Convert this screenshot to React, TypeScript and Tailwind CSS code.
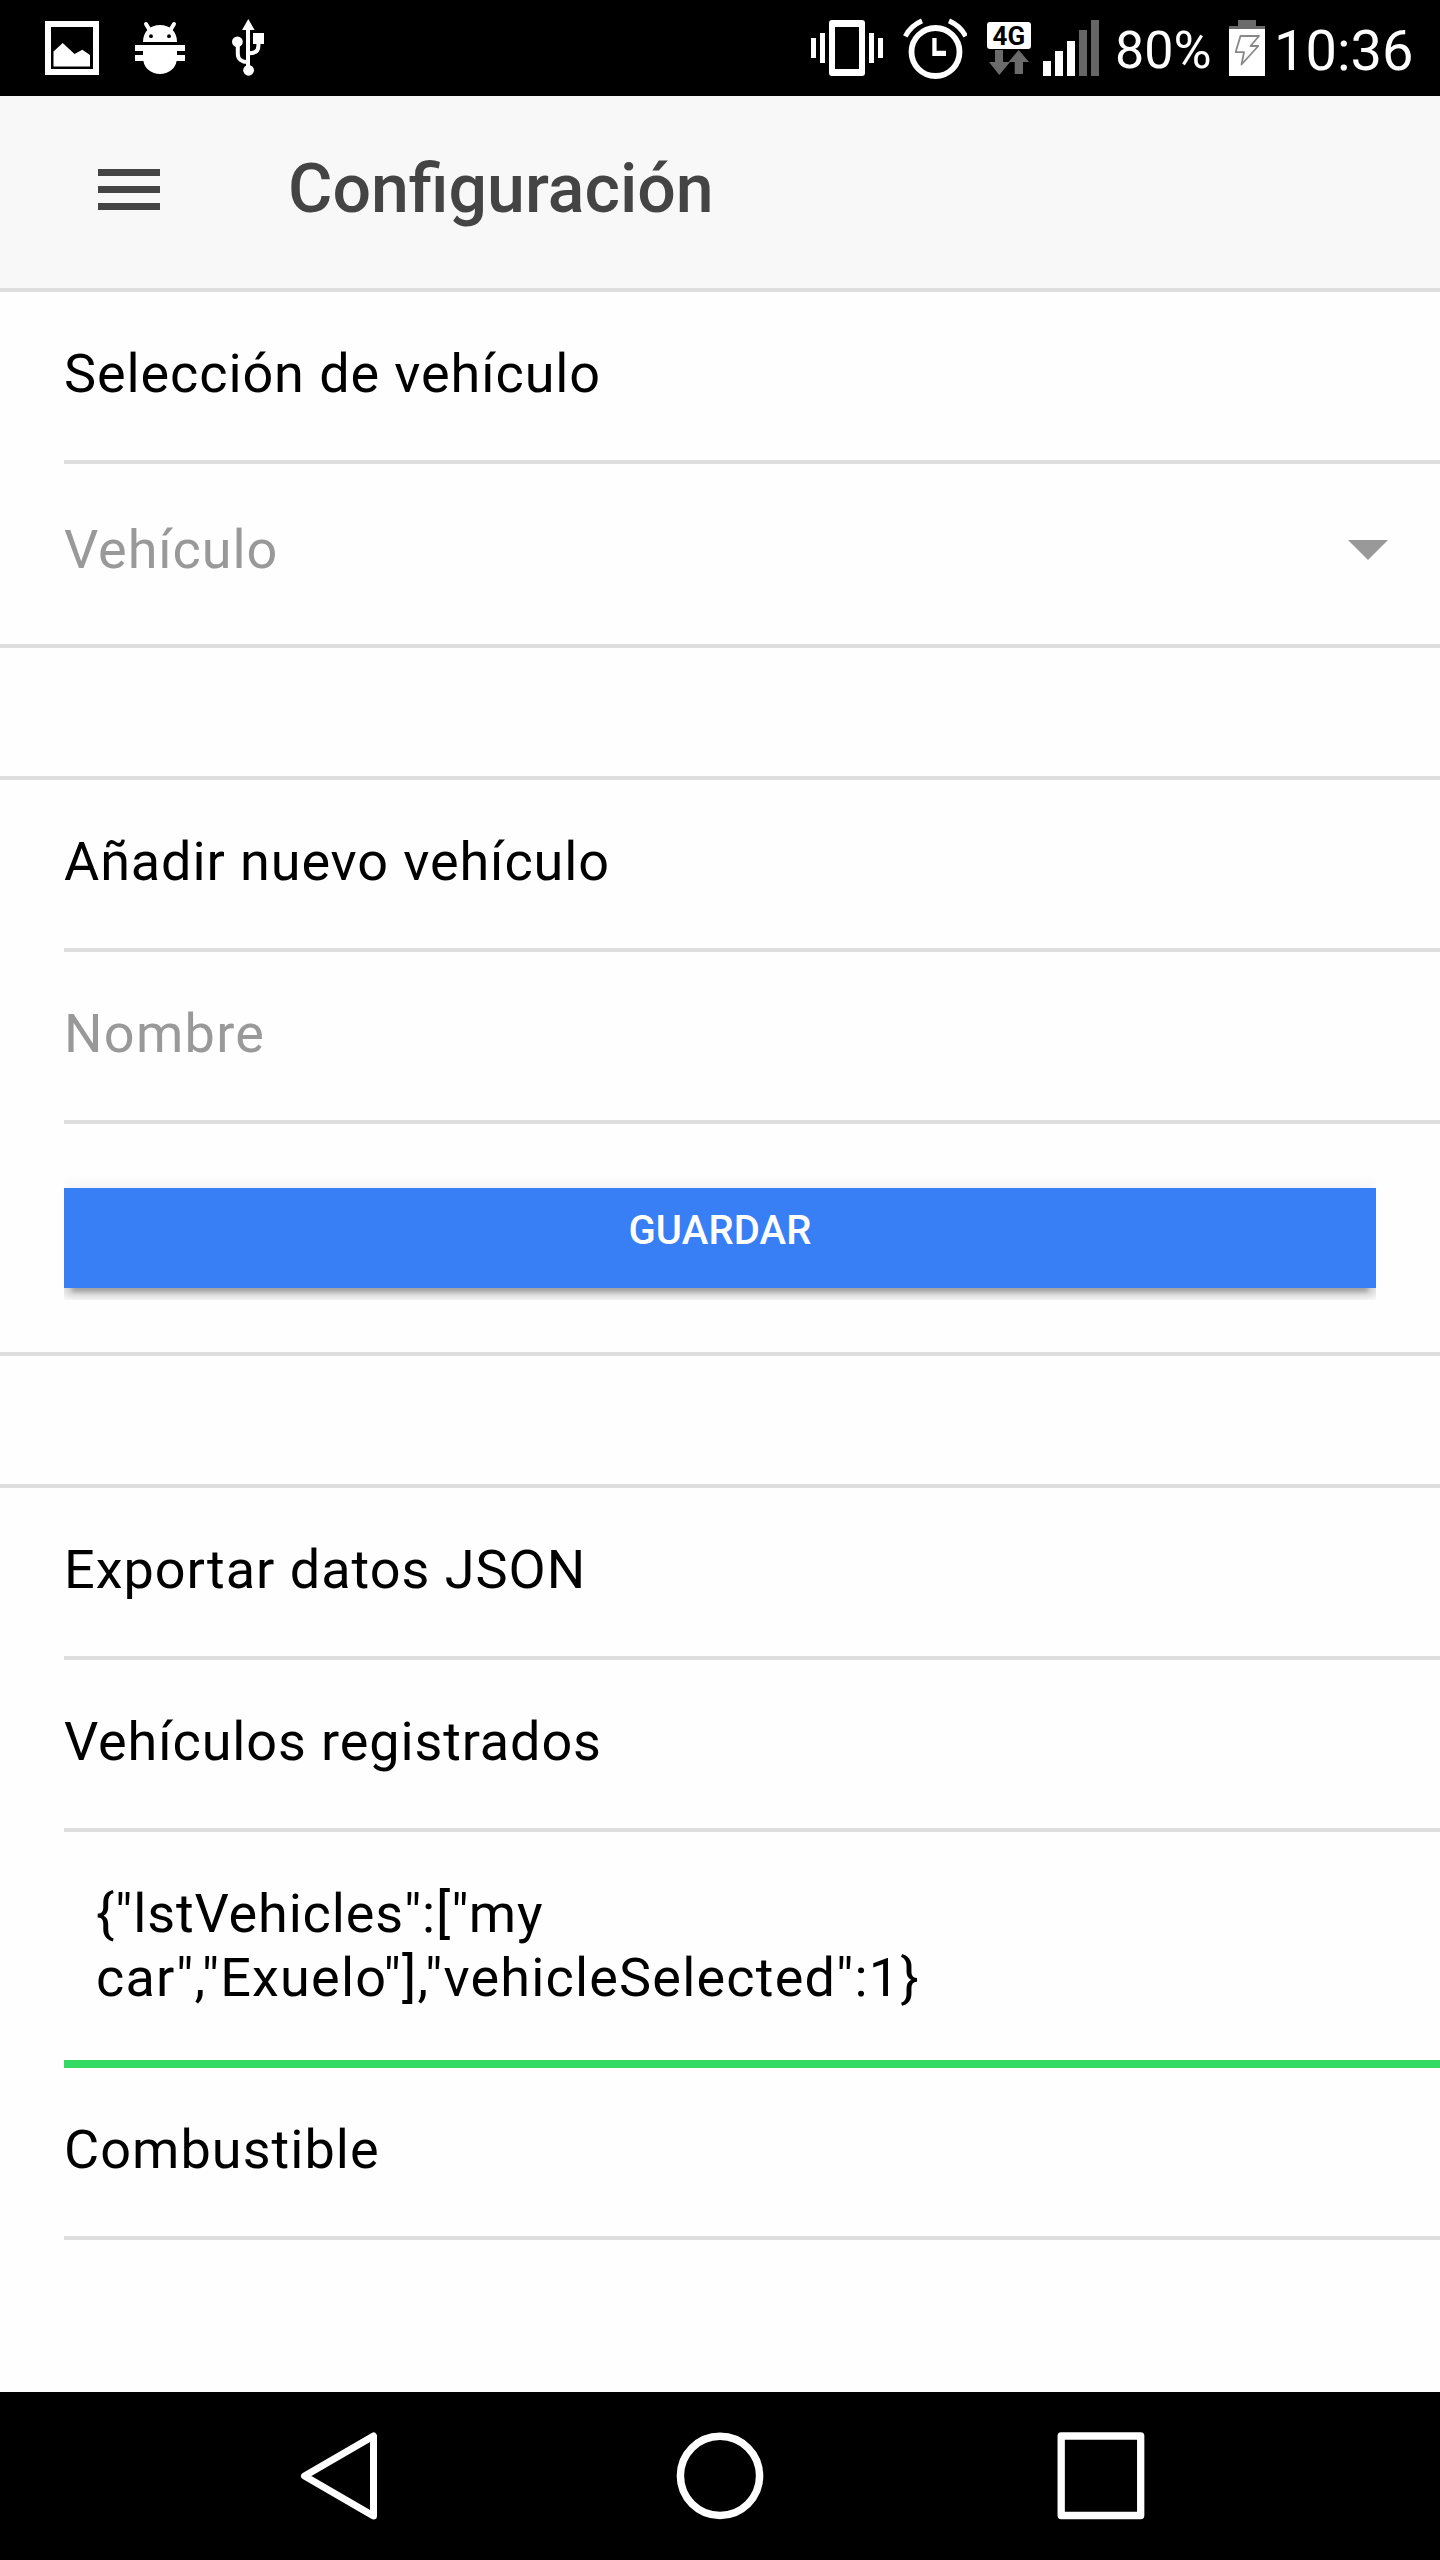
import type { ReactNode } from 'react'

function StatusBar() {
  return (
    <div className="flex h-24 items-start bg-black text-white">
      <svg className="ml-[45px] shrink-0" width="54" height="96" viewBox="45 0 54 96" fill="#fff">
        <path fillRule="evenodd" d="M45 21H99V75H45ZM51 27V69H93V27Z" />
        <path d="M53.5 51.5L62.7 43L74.5 54L82.3 49.8L90 55V66.5H53.5Z" />
      </svg>
      <svg className="ml-9 shrink-0" width="50" height="96" viewBox="135 0 50 96" fill="#fff">
        <path d="M146 24L149.6 30M174 24L170.4 30" stroke="#fff" strokeWidth="4" strokeLinecap="round" />
        <path d="M143 42C143 31.5 150 25 160 25S177 31.5 177 42Z" />
        <circle cx="151" cy="36.2" r="1.9" fill="#000" />
        <circle cx="169" cy="36.2" r="1.9" fill="#000" />
        <path d="M135 45H185V51H177V55H185V61H176.6C175.5 68.5 168.5 74 160 74S144.5 68.5 143.4 61H135V55H143V51H135Z" />
      </svg>
      <svg className="ml-[47px] shrink-0" width="32" height="96" viewBox="232 0 32 96" fill="#fff">
        <path d="M246 28H250V67H246ZM248.3 19L254.6 30H242ZM253 33H264V44H253Z" />
        <circle cx="237.4" cy="41.8" r="5.4" />
        <circle cx="248.6" cy="70.3" r="5.4" />
        <path d="M237.8 45V54C237.8 59 242 62 247.5 62M258.4 43V46C258.4 51 254.5 53.2 249 53.2" fill="none" stroke="#fff" strokeWidth="4" />
      </svg>

      <svg className="ml-[547px] shrink-0" width="72" height="96" viewBox="811 0 72 96" fill="#fff">
        <path d="M811 38H816V58H811ZM820 33H825V63H820ZM869 33H874V63H869ZM878 38H883V58H878Z" />
        <path fillRule="evenodd" d="M832 20H862Q865 20 865 23V73Q865 76 862 76H832Q829 76 829 73V23Q829 20 832 20ZM835 27V69H859V27Z" />
      </svg>
      <svg className="ml-5 shrink-0" width="64" height="96" viewBox="903 0 64 96" fill="none" stroke="#fff">
        <circle cx="935.5" cy="52" r="24" strokeWidth="5.8" />
        <path d="M905.3 36.3A34 34 0 0 1 922 20.9M949 20.9A34 34 0 0 1 965.7 36.3" strokeWidth="5" />
        <path d="M932.3 38H936.6V50.7H946V56H932.3Z" fill="#fff" stroke="none" />
      </svg>
      <div className="mt-[22px] ml-5 w-11 shrink-0">
        <div className="h-[27px] rounded-[3px] bg-white pl-[5.5px] text-[26px] leading-[28px] font-bold text-black">4G</div>
        <svg width="44" height="26" viewBox="987 49 44 26" fill="#6b6b6b">
          <path d="M995 50H1003V62H1010L999.3 75L989 62H995Z" />
          <path d="M1018.7 50L1029 62H1023V74H1014.7V62H1008.5Z" />
        </svg>
      </div>
      <svg className="ml-3 shrink-0" width="56" height="96" viewBox="1043 0 56 96">
        <path d="M1043 61H1051V76H1043ZM1055 51H1063V76H1055ZM1067 41H1075V76H1067Z" fill="#fff" />
        <path d="M1079 30H1087V76H1079ZM1091 20H1099V76H1091Z" fill="#666" />
      </svg>
      <span className="mt-5 ml-4 w-[114px] shrink-0 text-[52px] leading-[61px]">80%</span>
      <svg className="shrink-0" width="36" height="96" viewBox="1229 0 36 96">
        <path d="M1229 29H1265V76H1229Z" fill="#fff" />
        <path d="M1238 20H1256V26H1265V29H1229V26H1238Z" fill="#6b6b6b" />
        <path d="M1240.5 36H1259L1250.5 46H1258.3L1241.5 64.5L1244 52.2H1235.6Z" fill="none" stroke="#888" strokeWidth="1.8" strokeLinejoin="round" />
      </svg>
      <span className="mt-[18px] ml-[9px] shrink-0 text-[56px] leading-[66px]">10:36</span>
    </div>
  )
}

function Item({ children, className = '' }: { children: ReactNode; className?: string }) {
  return <div className={`ml-16 h-[172px] border-b-4 border-[#dedede] pt-[50px] ${className}`}>{children}</div>
}

function NavBar() {
  return (
    <div className="mt-auto flex h-[168px] items-start bg-black">
      <svg className="ml-[300px]" width="78" height="168" viewBox="300 2392 78 168" fill="none" stroke="#fff" strokeWidth="7" strokeLinejoin="round">
        <path d="M373.5 2436V2516L304.5 2476Z" />
      </svg>
      <svg className="ml-[298px]" width="88" height="168" viewBox="676 2392 88 168" fill="none" stroke="#fff" strokeWidth="7.5">
        <circle cx="720" cy="2475.8" r="39.6" />
      </svg>
      <svg className="ml-[293px]" width="88" height="168" viewBox="1057 2392 88 168" fill="none" stroke="#fff" strokeWidth="7.3" strokeLinejoin="round">
        <rect x="1061.2" y="2436" width="79.5" height="79.5" />
      </svg>
    </div>
  )
}

export default function App() {
  return (
    <div className="flex h-[2560px] w-[1440px] flex-col overflow-hidden bg-[#fefefe] font-[Roboto,sans-serif] text-[54px] leading-[64px] text-black">
      <StatusBar />

      <header className="flex h-[196px] items-start border-b-4 border-[#dedede] bg-[#f8f8f8] text-[#444]">
        <button className="mt-[73px] ml-[98px] flex w-[62px] flex-col gap-[10px]" aria-label="Menú">
          <span className="h-[7px] w-full bg-[#444]" />
          <span className="h-[7px] w-full bg-[#444]" />
          <span className="h-[7px] w-full bg-[#444]" />
        </button>
        <h1 className="mt-[53px] ml-32 text-[68px] leading-[80px] font-medium">Configuración</h1>
      </header>

      <section className="border-b-4 border-[#dedede]">
        <Item className="tracking-[0.9px]">Selección de vehículo</Item>
        <div className="ml-16 flex h-[180px] items-start justify-between pt-[54px] pr-[52px] tracking-[0.9px] text-[#999]">
          <span>Vehículo</span>
          <svg className="mt-[22px]" width="40" height="20" viewBox="0 0 40 20" fill="#999">
            <path d="M0 0H40L20 20Z" />
          </svg>
        </div>
      </section>

      <section className="mt-32 border-y-4 border-[#dedede]">
        <Item className="tracking-[0.9px]">Añadir nuevo vehículo</Item>
        <Item className="tracking-[1.3px] text-[#999]">Nombre</Item>
        <div className="h-[228px] px-16 pt-16">
          <button className="flex h-[100px] w-full justify-center bg-[#387ef5] pt-[19px] text-[40px] leading-[47px] font-medium tracking-[0.15px] text-white shadow-[0_8px_8px_0_rgba(0,0,0,0.14),0_12px_4px_-8px_rgba(0,0,0,0.2),0_4px_20px_0_rgba(0,0,0,0.12)] [clip-path:inset(-12px_0)]">
            GUARDAR
          </button>
        </div>
      </section>

      <section className="mt-32 border-t-4 border-[#dedede]">
        <Item className="tracking-[0.98px]">Exportar datos JSON</Item>
        <Item className="tracking-[0.88px]">Vehículos registrados</Item>
        <div className="ml-16 h-[236px] border-b-8 border-[#33db65] pt-[50px] pl-8">
          <p className="tracking-[0.85px]">{'{"lstVehicles":["my'}</p>
          <p className="tracking-[1.19px]">{'car","Exuelo"],"vehicleSelected":1}'}</p>
        </div>
        <Item className="tracking-[1.05px]">Combustible</Item>
      </section>

      <NavBar />
    </div>
  )
}
